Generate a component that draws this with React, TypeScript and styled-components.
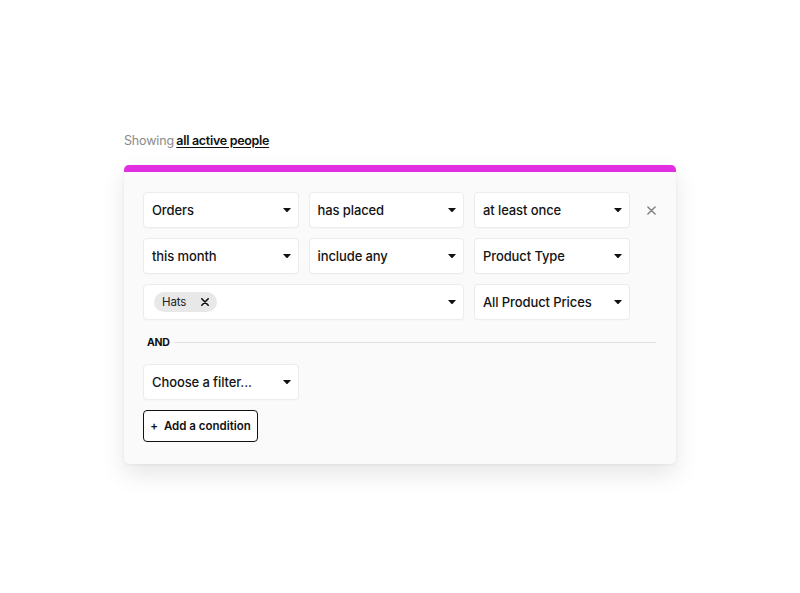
import React from "react";
import styled, { createGlobalStyle } from "styled-components";

const Global = createGlobalStyle`
  html, body { margin: 0; padding: 0; background: #ffffff; }
  body { font-family: Inter, "Noto Sans", "Liberation Sans", sans-serif; color: #111; }
  * { box-sizing: border-box; }
`;

const Page = styled.div`
  padding: 133px 0 40px 124px;
  width: 676px;
`;

const Summary = styled.div`
  font-size: 12.5px;
  line-height: 16px;
  color: #8a8a8a;
  letter-spacing: -0.15px;
`;

const SummaryLink = styled.a`
  color: #111;
  font-weight: 600;
  letter-spacing: -0.3px;
  margin-left: -1px;
  text-decoration: underline;
  text-underline-offset: 2px;
`;

const Card = styled.div`
  margin-top: 16px;
  width: 552px;
  background: #fafafa;
  border-radius: 5px;
  border-top: 7px solid #e02ee0;
  box-shadow: 0 10px 24px rgba(0, 0, 0, 0.1), 0 1px 3px rgba(0, 0, 0, 0.05);
  padding: 20px 20px 22px 19px;
  display: flex;
  flex-direction: column;
`;

const Row = styled.div<{ $mt?: number }>`
  display: grid;
  grid-template-columns: 155.5px 155.5px 155.5px 1fr;
  column-gap: 10px;
  align-items: center;
  margin-top: ${(p) => p.$mt ?? 0}px;
`;

const SelectBox = styled.div<{ $span?: number }>`
  grid-column: span ${(p) => p.$span ?? 1};
  height: 36px;
  background: #ffffff;
  border: 1px solid #ececec;
  border-radius: 4px;
  box-shadow: 0 1px 1px rgba(0, 0, 0, 0.02);
  display: flex;
  align-items: center;
  padding: 0 7px 0 8px;
  font-size: 13px;
  font-weight: 500;
  color: #141414;
  letter-spacing: -0.1px;
`;

const SelectLabel = styled.span`
  flex: 1;
  white-space: nowrap;
`;

const Tags = styled.div`
  flex: 1;
  display: flex;
  gap: 6px;
  margin-left: 2px;
`;

const Tag = styled.span`
  display: inline-flex;
  align-items: center;
  height: 20px;
  padding: 0 8px 0 8px;
  border-radius: 10px;
  background: #e8e8e8;
  font-size: 11.5px;
  font-weight: 400;
  color: #222;
  gap: 15px;
`;

const Remove = styled.button`
  border: 0;
  background: none;
  padding: 0;
  display: flex;
  align-items: center;
  justify-content: center;
  cursor: pointer;
  color: #777;
`;

const CloseCell = styled(Remove)`
  justify-self: start;
  margin-left: 7px;
`;

const Caret = () => (
  <svg width="8" height="4.5" viewBox="0 0 8 4.5">
    <path d="M0 0 L8 0 L4 4.5 Z" fill="#111" />
  </svg>
);

const XIcon = ({ size, color, w }: { size: number; color: string; w: number }) => (
  <svg width={size} height={size} viewBox="0 0 10 10">
    <path d="M1 1 L9 9 M9 1 L1 9" stroke={color} strokeWidth={w} strokeLinecap="round" />
  </svg>
);

const Select = ({ label, span }: { label: string; span?: number }) => (
  <SelectBox $span={span}>
    <SelectLabel>{label}</SelectLabel>
    <Caret />
  </SelectBox>
);

const Divider = styled.div`
  display: flex;
  align-items: center;
  gap: 5px;
  margin: 15px 0 14px 4px;
  height: 15px;
`;

const AndLabel = styled.span`
  font-size: 10.5px;
  font-weight: 700;
  color: #111;
  letter-spacing: -0.3px;
`;

const Rule = styled.div`
  flex: 1;
  height: 1.5px;
  background: #e3e3e3;
`;

const AddButton = styled.button`
  margin-top: 10px;
  align-self: flex-start;
  width: 115px;
  height: 32px;
  border: 1.5px solid #111;
  border-radius: 4px;
  background: #ffffff;
  font-family: inherit;
  font-size: 11.5px;
  font-weight: 600;
  color: #111;
  display: flex;
  align-items: center;
  justify-content: center;
  gap: 6px;
  padding: 0;
  cursor: pointer;
`;

export default function App() {
  return (
    <>
      <Global />
      <Page>
        <Summary>
          Showing <SummaryLink>all active people</SummaryLink>
        </Summary>
        <Card>
          <Row>
            <Select label="Orders" />
            <Select label="has placed" />
            <Select label="at least once" />
            <CloseCell>
              <XIcon size={9} color="#808080" w={1.6} />
            </CloseCell>
          </Row>
          <Row $mt={10}>
            <Select label="this month" />
            <Select label="include any" />
            <Select label="Product Type" />
          </Row>
          <Row $mt={10}>
            <SelectBox $span={2}>
              <Tags>
                <Tag>
                  Hats
                  <Remove>
                    <XIcon size={8} color="#111" w={2} />
                  </Remove>
                </Tag>
              </Tags>
              <Caret />
            </SelectBox>
            <Select label="All Product Prices" />
          </Row>
          <Divider>
            <AndLabel>AND</AndLabel>
            <Rule />
          </Divider>
          <Row>
            <Select label="Choose a filter..." />
          </Row>
          <AddButton>
            <span>+</span>
            <span>Add a condition</span>
          </AddButton>
        </Card>
      </Page>
    </>
  );
}
